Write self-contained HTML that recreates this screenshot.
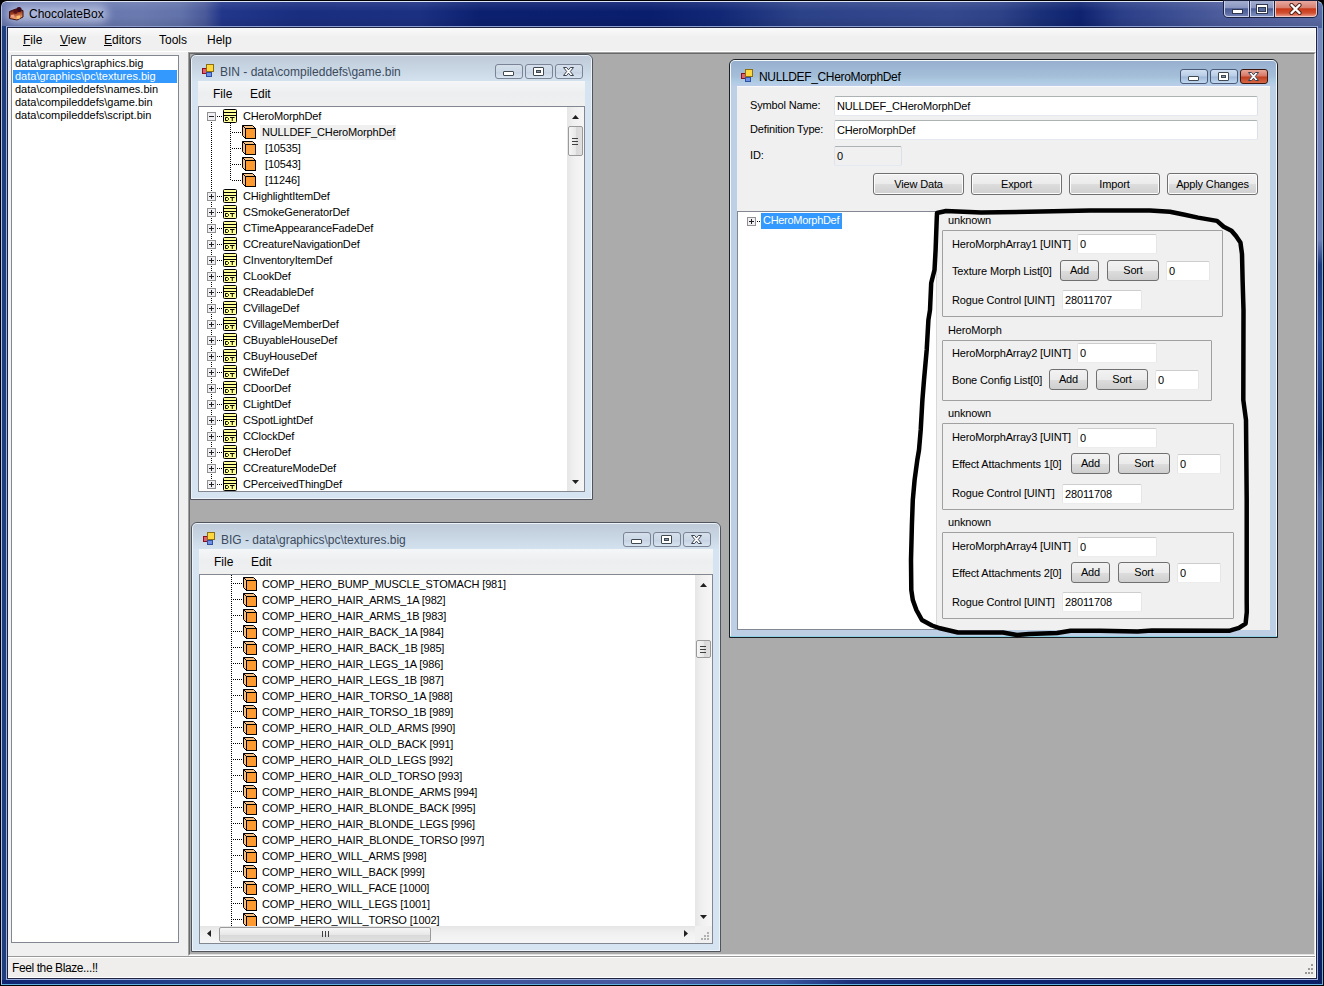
<!DOCTYPE html>
<html><head><meta charset="utf-8">
<style>
*{box-sizing:border-box;margin:0;padding:0}
html,body{width:1324px;height:986px;overflow:hidden;background:#000}
body{position:relative;font-family:"Liberation Sans",sans-serif;font-size:11px;color:#000}
.a{position:absolute}
.t{position:absolute;white-space:pre;line-height:13px}
</style></head><body>
<!-- main frame -->
<div class="a" style="left:0;top:0;width:1324px;height:986px;background:#000;border-radius:7px 7px 0 0"></div>
<div class="a" style="left:1px;top:1px;width:1322px;height:984px;background:linear-gradient(90deg,#1e3e7e,#1c3a7a 30%,#2a4284 60%,#4a5ea0);border-radius:6px 6px 0 0;border-left:1px solid #b0c0e8;border-top:1px solid #dde4f4;border-right:1px solid #6ab0e0;border-bottom:1px solid #60b0e0"></div>
<div class="a" style="left:1318px;top:28px;width:4px;height:956px;background:linear-gradient(#7888bc 0,#7080b8 212px,#1e3a80 237px,#3050a0 312px,#1a3478 412px,#5068a8 472px,#4a60a0 592px,#3a4c98 822px,#102a70 872px,#0a1e60 956px)"></div>
<div class="a" style="left:2px;top:980px;width:1316px;height:4px;background:linear-gradient(90deg,#0e2470 0,#1a3480 100px,#2c4a90 250px,#4a5aa0 660px,#3a58a0 780px,#1a2e78 850px,#0e2470 1000px,#0a1e68 1316px)"></div>
<!-- title bar gradient -->
<div class="a" style="left:2px;top:2px;width:1320px;height:24px;border-radius:5px 5px 0 0;background:linear-gradient(90deg,#6676ae 0,#6a7ab0 140px,#6272aa 178px,#4a5a9a 203px,#22368a 220px,#1a2e80 298px,#1c3082 418px,#0c2070 478px,#0a1e6e 648px,#122876 718px,#2c4288 798px,#34488e 948px,#2e4288 998px,#1a3078 1038px,#0e2270 1078px,#2a3e88 1118px,#4c5c9c 1218px,#5a6aa4 1320px)"></div>
<div class="a" style="left:2px;top:2px;width:1320px;height:24px;background:linear-gradient(#ffffff18,#ffffff00 40%,#00000000 60%,#00000018)"></div>
<div class="a" style="left:6px;top:26px;width:1312px;height:1px;background:#8d9fd0"></div>
<div class="a" style="left:6px;top:5px;width:102px;height:18px;border-radius:9px;background:rgba(225,232,250,.55);filter:blur(4px)"></div>
<!-- app icon -->
<svg class="a" style="left:8px;top:6px" width="16" height="16" viewBox="0 0 16 16">
<defs><linearGradient id="ib" x1="0" y1="0" x2="0.3" y2="1"><stop offset="0" stop-color="#4a1018"/><stop offset="0.45" stop-color="#9a3a20"/><stop offset="1" stop-color="#f8b070"/></linearGradient></defs>
<path d="M1.5 5.5 L8 3 L15 4.5 L15 11 L9 14 L1.5 12.5 Z" fill="url(#ib)" stroke="#3a1010" stroke-width="1"/>
<circle cx="11" cy="3.5" r="2.6" fill="#3a0c20"/><circle cx="7.5" cy="5.5" r="2.2" fill="#5a1418"/>
<path d="M3 9 L6 8.5 L7 12 L3 11.5Z" fill="#f0a088"/><path d="M8.5 10 L12 9.5 L12 12.5 L9 13Z" fill="#fcc070"/>
</svg>
<div class="t" style="left:29px;top:7px;font-size:12px;line-height:15px;color:#000">ChocolateBox</div>
<!-- caption buttons -->
<div class="a" style="left:1223px;top:0px;width:95px;height:18px;border-radius:0 0 5px 5px;background:#1a2240"></div>
<div class="a" style="left:1224px;top:1px;width:25px;height:16px;border-radius:0 0 0 4px;background:linear-gradient(#a4aed0,#8a96c0 45%,#4a5a94 52%,#5a6aa0 80%,#7080b4);border:1px solid #c8d0ec;border-top:none"></div>
<div class="a" style="left:1250px;top:1px;width:24px;height:16px;background:linear-gradient(#a4aed0,#8a96c0 45%,#4a5a94 52%,#6a7eb0 80%,#7a8cbc);border:1px solid #c8d0ec;border-top:none"></div>
<div class="a" style="left:1275px;top:1px;width:42px;height:16px;border-radius:0 0 4px 0;background:linear-gradient(#e8a8a0,#d88070 45%,#c83818 52%,#d05030 80%,#e89080 100%);border:1px solid #f0c8c0;border-top:none"></div>
<div class="a" style="left:1232px;top:9px;width:11px;height:5px;background:#fff;border:1px solid #303850"></div>
<div class="a" style="left:1256px;top:4px;width:12px;height:10px;border:1px solid #303850;background:#fff"></div>
<div class="a" style="left:1258px;top:7px;width:8px;height:5px;border:1px solid #303850;background:#5a6a9a"></div>
<svg class="a" style="left:1289px;top:3px" width="13" height="12" viewBox="0 0 13 12"><path d="M2.5 2 L10.5 10 M10.5 2 L2.5 10" stroke="#502018" stroke-width="4.2" stroke-linecap="round"/><path d="M2.5 2 L10.5 10 M10.5 2 L2.5 10" stroke="#fff" stroke-width="2.4" stroke-linecap="round"/></svg>

<!-- client area -->
<div class="a" style="left:6px;top:26px;width:1312px;height:954px;background:#1e2440;border:1px solid #a0b0e0;border-top-color:#8d9fd0"></div>
<div class="a" style="left:8px;top:28px;width:1308px;height:950px;background:#f0f0f0;border-right:1px solid #fff"></div>
<!-- menu bar -->
<div class="a" style="left:8px;top:28px;width:1307px;height:24px;background:linear-gradient(#fafafa,#f0f0f0 40%,#f0f0f0);border-bottom:1px solid #fff"></div>
<div class="t" style="left:23px;top:33px;font-size:12px;line-height:14px"><u>F</u>ile</div>
<div class="t" style="left:60px;top:33px;font-size:12px;line-height:14px"><u>V</u>iew</div>
<div class="t" style="left:104px;top:33px;font-size:12px;line-height:14px"><u>E</u>ditors</div>
<div class="t" style="left:159px;top:33px;font-size:12px;line-height:14px">Tools</div>
<div class="t" style="left:207px;top:33px;font-size:12px;line-height:14px">Help</div>

<!-- left listbox -->
<div class="a" style="left:11px;top:55px;width:168px;height:888px;background:#fff;border:1px solid #828790"></div>
<div class="a" style="left:13px;top:70px;width:164px;height:13px;background:#3399ff"></div>
<div class="t" style="left:15px;top:57px">data\graphics\graphics.big</div>
<div class="t" style="left:15px;top:70px;color:#fff">data\graphics\pc\textures.big</div>
<div class="t" style="left:15px;top:83px">data\compileddefs\names.bin</div>
<div class="t" style="left:15px;top:96px">data\compileddefs\game.bin</div>
<div class="t" style="left:15px;top:109px">data\compileddefs\script.bin</div>

<!-- MDI client -->
<div class="a" style="left:188px;top:52px;width:1128px;height:904px;background:#ababab;border:1px solid;border-color:#a0a0a0 #fff #fff #a0a0a0"></div>
<div class="a" style="left:189px;top:53px;width:1126px;height:902px;border:1px solid;border-color:#696969 #e3e3e3 #e3e3e3 #696969"></div>

<!-- status bar -->
<div class="a" style="left:8px;top:956px;width:1307px;height:1px;background:#999"></div>
<div class="a" style="left:8px;top:957px;width:1307px;height:21px;background:#f0eeec;border-top:1px solid #fff;border-bottom:1px solid #fff"></div>
<div class="t" style="left:12px;top:962px;font-size:12px;letter-spacing:-0.4px">Feel the Blaze...!!</div>
<!-- grip -->
<svg class="a" style="left:1302px;top:963px" width="12" height="12" viewBox="0 0 12 12" fill="#9a9a9a">
<rect x="9" y="1" width="2" height="2"/><rect x="6" y="5" width="2" height="2"/><rect x="9" y="5" width="2" height="2"/>
<rect x="3" y="9" width="2" height="2"/><rect x="6" y="9" width="2" height="2"/><rect x="9" y="9" width="2" height="2"/></svg>


<div class="a" style="left:190px;top:54px;width:403px;height:446px;background:#d6e4f2;border:1px solid #50545c;border-radius:6px 6px 0 0;overflow:hidden">
<div class="a" style="left:0px;top:0px;width:401px;height:444px;border:1px solid rgba(255,255,255,0.55);border-radius:5px 5px 0 0;border-bottom-color:rgba(255,255,255,.6)"></div>
<div class="a" style="left:1px;top:1px;width:399px;height:25px;background:linear-gradient(#c0cad8,#c8d6e4 50%,#d4e2f0);border-radius:4px 4px 0 0"></div>
<svg class="a" style="left:10px;top:9px" width="14" height="14" viewBox="0 0 14 14"><rect x="1.5" y="4.5" width="4" height="5" fill="#e06070" stroke="#8a1020"/><rect x="5.5" y="0.5" width="7" height="7" fill="#ffd840" stroke="#8a7010"/><rect x="5.5" y="8.5" width="5" height="4" fill="#7090e8" stroke="#3050a0"/></svg>
<div class="t" style="left:29px;top:9px;font-size:12px;color:#3c4a5c;letter-spacing:0px;line-height:16px">BIN - data\compileddefs\game.bin</div>
<div class="a" style="left:304px;top:9px;width:28px;height:15px;background:linear-gradient(#d6e0ec,#ccd8e6 50%,#c6d2e2 55%,#d8e4f0);border:1px solid #7a8494;border-radius:3px"></div>
<div class="a" style="left:312px;top:16px;width:11px;height:5px;background:#fff;border:1px solid #404850;border-radius:1px"></div>
<div class="a" style="left:334px;top:9px;width:28px;height:15px;background:linear-gradient(#d6e0ec,#ccd8e6 50%,#c6d2e2 55%,#d8e4f0);border:1px solid #7a8494;border-radius:3px"></div>
<div class="a" style="left:342px;top:12px;width:11px;height:9px;background:#fff;border:1px solid #404850;border-radius:1px"></div>
<div class="a" style="left:345px;top:15px;width:5px;height:3px;background:#8a94a4;border:1px solid #404850"></div>
<div class="a" style="left:364px;top:9px;width:28px;height:15px;background:linear-gradient(#d6e0ec,#ccd8e6 50%,#c6d2e2 55%,#d8e4f0);border:1px solid #7a8494;border-radius:3px"></div>
<svg class="a" style="left:372px;top:12px" width="11" height="9" viewBox="0 0 11 9"><path d="M0.5 0.5H3.6L5.5 2.8L7.4 0.5H10.5L7.3 4.5L10.5 8.5H7.4L5.5 6.2L3.6 8.5H0.5L3.7 4.5Z" fill="#fff" stroke="#3a4250" stroke-width="1" stroke-linejoin="round"/></svg>
<div class="a" style="left:7px;top:26px;width:387px;height:411px;background:#f0f0f0;border-top:1px solid #f8fafc"></div>
<div class="a" style="left:7px;top:26px;width:387px;height:25px;background:linear-gradient(#f4f6f8,#eceef0 50%,#f0f0f0)"></div>
<div class="t" style="left:22px;top:32px;font-size:12px;color:#000;letter-spacing:0px;line-height:15px">File</div>
<div class="t" style="left:59px;top:32px;font-size:12px;color:#000;letter-spacing:0px;line-height:15px">Edit</div>
<div class="a" style="left:7px;top:51px;width:387px;height:386px;background:#fff;border:1px solid #828790"></div>
<div class="a" style="left:8px;top:52px;width:368px;height:384px;overflow:hidden">
<svg class="a" style="left:8px;top:5px" width="9" height="9" viewBox="0 0 9 9"><rect x="0.5" y="0.5" width="8" height="8" fill="#f0f0f4" stroke="#919191"/><path d="M2 4.5H7" stroke="#202020"/></svg>
<div class="a" style="left:18px;top:9px;width:6px;height:1px;background:repeating-linear-gradient(90deg,#000 0 1px,transparent 1px 2px)"></div>
<svg class="a" style="left:24px;top:2px" width="14" height="14" viewBox="0 0 14 14"><rect x="0.5" y="0.5" width="13" height="13" rx="1" fill="#ffff99" stroke="#000"/><path d="M1 3.5H13M1 6.5H13" stroke="#000"/><path d="M2.5 8.5h2l1 1v1l-1 1h-2z" fill="none" stroke="#000"/><path d="M7 8.5h4.5M9.25 8.5v3.5" stroke="#000"/></svg>
<div class="t" style="left:44px;top:3px;font-size:11px;color:#000;letter-spacing:-0.15px;">CHeroMorphDef</div>
<div class="a" style="left:31px;top:16px;width:1px;height:10px;background:repeating-linear-gradient(#000 0 1px,transparent 1px 2px)"></div>
<div class="a" style="left:33px;top:25px;width:9px;height:1px;background:repeating-linear-gradient(90deg,#000 0 1px,transparent 1px 2px)"></div>
<svg class="a" style="left:43px;top:18px" width="14" height="14" viewBox="0 0 14 14"><path d="M0.5 0.5H10.5L13.5 3.5V13.5H3.5L0.5 10.5Z" fill="#f8c080" stroke="#000"/><rect x="3.5" y="3.5" width="10" height="10" fill="#ff9a30" stroke="#000"/><path d="M0.5 0.5L3.5 3.5" stroke="#000"/></svg>
<div class="a" style="left:61px;top:18px;width:136px;height:15px;background:#f0f0f0"></div>
<div class="t" style="left:63px;top:19px;font-size:11px;color:#000;letter-spacing:-0.15px;">NULLDEF_CHeroMorphDef</div>
<div class="a" style="left:33px;top:41px;width:9px;height:1px;background:repeating-linear-gradient(90deg,#000 0 1px,transparent 1px 2px)"></div>
<svg class="a" style="left:43px;top:34px" width="14" height="14" viewBox="0 0 14 14"><path d="M0.5 0.5H10.5L13.5 3.5V13.5H3.5L0.5 10.5Z" fill="#f8c080" stroke="#000"/><rect x="3.5" y="3.5" width="10" height="10" fill="#ff9a30" stroke="#000"/><path d="M0.5 0.5L3.5 3.5" stroke="#000"/></svg>
<div class="t" style="left:66px;top:35px;font-size:11px;color:#000;letter-spacing:-0.15px;">[10535]</div>
<div class="a" style="left:33px;top:57px;width:9px;height:1px;background:repeating-linear-gradient(90deg,#000 0 1px,transparent 1px 2px)"></div>
<svg class="a" style="left:43px;top:50px" width="14" height="14" viewBox="0 0 14 14"><path d="M0.5 0.5H10.5L13.5 3.5V13.5H3.5L0.5 10.5Z" fill="#f8c080" stroke="#000"/><rect x="3.5" y="3.5" width="10" height="10" fill="#ff9a30" stroke="#000"/><path d="M0.5 0.5L3.5 3.5" stroke="#000"/></svg>
<div class="t" style="left:66px;top:51px;font-size:11px;color:#000;letter-spacing:-0.15px;">[10543]</div>
<div class="a" style="left:33px;top:73px;width:9px;height:1px;background:repeating-linear-gradient(90deg,#000 0 1px,transparent 1px 2px)"></div>
<svg class="a" style="left:43px;top:66px" width="14" height="14" viewBox="0 0 14 14"><path d="M0.5 0.5H10.5L13.5 3.5V13.5H3.5L0.5 10.5Z" fill="#f8c080" stroke="#000"/><rect x="3.5" y="3.5" width="10" height="10" fill="#ff9a30" stroke="#000"/><path d="M0.5 0.5L3.5 3.5" stroke="#000"/></svg>
<div class="t" style="left:66px;top:67px;font-size:11px;color:#000;letter-spacing:-0.15px;">[11246]</div>
<div class="a" style="left:31px;top:16px;width:1px;height:57px;background:repeating-linear-gradient(#000 0 1px,transparent 1px 2px)"></div>
<div class="a" style="left:12px;top:15px;width:1px;height:358px;background:repeating-linear-gradient(#000 0 1px,transparent 1px 2px)"></div>
<svg class="a" style="left:8px;top:85px" width="9" height="9" viewBox="0 0 9 9"><rect x="0.5" y="0.5" width="8" height="8" fill="#f0f0f4" stroke="#919191"/><path d="M2 4.5H7" stroke="#202020"/><path d="M4.5 2V7" stroke="#202020"/></svg>
<div class="a" style="left:18px;top:89px;width:6px;height:1px;background:repeating-linear-gradient(90deg,#000 0 1px,transparent 1px 2px)"></div>
<svg class="a" style="left:24px;top:82px" width="14" height="14" viewBox="0 0 14 14"><rect x="0.5" y="0.5" width="13" height="13" rx="1" fill="#ffff99" stroke="#000"/><path d="M1 3.5H13M1 6.5H13" stroke="#000"/><path d="M2.5 8.5h2l1 1v1l-1 1h-2z" fill="none" stroke="#000"/><path d="M7 8.5h4.5M9.25 8.5v3.5" stroke="#000"/></svg>
<div class="t" style="left:44px;top:83px;font-size:11px;color:#000;letter-spacing:-0.15px;">CHighlightItemDef</div>
<svg class="a" style="left:8px;top:101px" width="9" height="9" viewBox="0 0 9 9"><rect x="0.5" y="0.5" width="8" height="8" fill="#f0f0f4" stroke="#919191"/><path d="M2 4.5H7" stroke="#202020"/><path d="M4.5 2V7" stroke="#202020"/></svg>
<div class="a" style="left:18px;top:105px;width:6px;height:1px;background:repeating-linear-gradient(90deg,#000 0 1px,transparent 1px 2px)"></div>
<svg class="a" style="left:24px;top:98px" width="14" height="14" viewBox="0 0 14 14"><rect x="0.5" y="0.5" width="13" height="13" rx="1" fill="#ffff99" stroke="#000"/><path d="M1 3.5H13M1 6.5H13" stroke="#000"/><path d="M2.5 8.5h2l1 1v1l-1 1h-2z" fill="none" stroke="#000"/><path d="M7 8.5h4.5M9.25 8.5v3.5" stroke="#000"/></svg>
<div class="t" style="left:44px;top:99px;font-size:11px;color:#000;letter-spacing:-0.15px;">CSmokeGeneratorDef</div>
<svg class="a" style="left:8px;top:117px" width="9" height="9" viewBox="0 0 9 9"><rect x="0.5" y="0.5" width="8" height="8" fill="#f0f0f4" stroke="#919191"/><path d="M2 4.5H7" stroke="#202020"/><path d="M4.5 2V7" stroke="#202020"/></svg>
<div class="a" style="left:18px;top:121px;width:6px;height:1px;background:repeating-linear-gradient(90deg,#000 0 1px,transparent 1px 2px)"></div>
<svg class="a" style="left:24px;top:114px" width="14" height="14" viewBox="0 0 14 14"><rect x="0.5" y="0.5" width="13" height="13" rx="1" fill="#ffff99" stroke="#000"/><path d="M1 3.5H13M1 6.5H13" stroke="#000"/><path d="M2.5 8.5h2l1 1v1l-1 1h-2z" fill="none" stroke="#000"/><path d="M7 8.5h4.5M9.25 8.5v3.5" stroke="#000"/></svg>
<div class="t" style="left:44px;top:115px;font-size:11px;color:#000;letter-spacing:-0.15px;">CTimeAppearanceFadeDef</div>
<svg class="a" style="left:8px;top:133px" width="9" height="9" viewBox="0 0 9 9"><rect x="0.5" y="0.5" width="8" height="8" fill="#f0f0f4" stroke="#919191"/><path d="M2 4.5H7" stroke="#202020"/><path d="M4.5 2V7" stroke="#202020"/></svg>
<div class="a" style="left:18px;top:137px;width:6px;height:1px;background:repeating-linear-gradient(90deg,#000 0 1px,transparent 1px 2px)"></div>
<svg class="a" style="left:24px;top:130px" width="14" height="14" viewBox="0 0 14 14"><rect x="0.5" y="0.5" width="13" height="13" rx="1" fill="#ffff99" stroke="#000"/><path d="M1 3.5H13M1 6.5H13" stroke="#000"/><path d="M2.5 8.5h2l1 1v1l-1 1h-2z" fill="none" stroke="#000"/><path d="M7 8.5h4.5M9.25 8.5v3.5" stroke="#000"/></svg>
<div class="t" style="left:44px;top:131px;font-size:11px;color:#000;letter-spacing:-0.15px;">CCreatureNavigationDef</div>
<svg class="a" style="left:8px;top:149px" width="9" height="9" viewBox="0 0 9 9"><rect x="0.5" y="0.5" width="8" height="8" fill="#f0f0f4" stroke="#919191"/><path d="M2 4.5H7" stroke="#202020"/><path d="M4.5 2V7" stroke="#202020"/></svg>
<div class="a" style="left:18px;top:153px;width:6px;height:1px;background:repeating-linear-gradient(90deg,#000 0 1px,transparent 1px 2px)"></div>
<svg class="a" style="left:24px;top:146px" width="14" height="14" viewBox="0 0 14 14"><rect x="0.5" y="0.5" width="13" height="13" rx="1" fill="#ffff99" stroke="#000"/><path d="M1 3.5H13M1 6.5H13" stroke="#000"/><path d="M2.5 8.5h2l1 1v1l-1 1h-2z" fill="none" stroke="#000"/><path d="M7 8.5h4.5M9.25 8.5v3.5" stroke="#000"/></svg>
<div class="t" style="left:44px;top:147px;font-size:11px;color:#000;letter-spacing:-0.15px;">CInventoryItemDef</div>
<svg class="a" style="left:8px;top:165px" width="9" height="9" viewBox="0 0 9 9"><rect x="0.5" y="0.5" width="8" height="8" fill="#f0f0f4" stroke="#919191"/><path d="M2 4.5H7" stroke="#202020"/><path d="M4.5 2V7" stroke="#202020"/></svg>
<div class="a" style="left:18px;top:169px;width:6px;height:1px;background:repeating-linear-gradient(90deg,#000 0 1px,transparent 1px 2px)"></div>
<svg class="a" style="left:24px;top:162px" width="14" height="14" viewBox="0 0 14 14"><rect x="0.5" y="0.5" width="13" height="13" rx="1" fill="#ffff99" stroke="#000"/><path d="M1 3.5H13M1 6.5H13" stroke="#000"/><path d="M2.5 8.5h2l1 1v1l-1 1h-2z" fill="none" stroke="#000"/><path d="M7 8.5h4.5M9.25 8.5v3.5" stroke="#000"/></svg>
<div class="t" style="left:44px;top:163px;font-size:11px;color:#000;letter-spacing:-0.15px;">CLookDef</div>
<svg class="a" style="left:8px;top:181px" width="9" height="9" viewBox="0 0 9 9"><rect x="0.5" y="0.5" width="8" height="8" fill="#f0f0f4" stroke="#919191"/><path d="M2 4.5H7" stroke="#202020"/><path d="M4.5 2V7" stroke="#202020"/></svg>
<div class="a" style="left:18px;top:185px;width:6px;height:1px;background:repeating-linear-gradient(90deg,#000 0 1px,transparent 1px 2px)"></div>
<svg class="a" style="left:24px;top:178px" width="14" height="14" viewBox="0 0 14 14"><rect x="0.5" y="0.5" width="13" height="13" rx="1" fill="#ffff99" stroke="#000"/><path d="M1 3.5H13M1 6.5H13" stroke="#000"/><path d="M2.5 8.5h2l1 1v1l-1 1h-2z" fill="none" stroke="#000"/><path d="M7 8.5h4.5M9.25 8.5v3.5" stroke="#000"/></svg>
<div class="t" style="left:44px;top:179px;font-size:11px;color:#000;letter-spacing:-0.15px;">CReadableDef</div>
<svg class="a" style="left:8px;top:197px" width="9" height="9" viewBox="0 0 9 9"><rect x="0.5" y="0.5" width="8" height="8" fill="#f0f0f4" stroke="#919191"/><path d="M2 4.5H7" stroke="#202020"/><path d="M4.5 2V7" stroke="#202020"/></svg>
<div class="a" style="left:18px;top:201px;width:6px;height:1px;background:repeating-linear-gradient(90deg,#000 0 1px,transparent 1px 2px)"></div>
<svg class="a" style="left:24px;top:194px" width="14" height="14" viewBox="0 0 14 14"><rect x="0.5" y="0.5" width="13" height="13" rx="1" fill="#ffff99" stroke="#000"/><path d="M1 3.5H13M1 6.5H13" stroke="#000"/><path d="M2.5 8.5h2l1 1v1l-1 1h-2z" fill="none" stroke="#000"/><path d="M7 8.5h4.5M9.25 8.5v3.5" stroke="#000"/></svg>
<div class="t" style="left:44px;top:195px;font-size:11px;color:#000;letter-spacing:-0.15px;">CVillageDef</div>
<svg class="a" style="left:8px;top:213px" width="9" height="9" viewBox="0 0 9 9"><rect x="0.5" y="0.5" width="8" height="8" fill="#f0f0f4" stroke="#919191"/><path d="M2 4.5H7" stroke="#202020"/><path d="M4.5 2V7" stroke="#202020"/></svg>
<div class="a" style="left:18px;top:217px;width:6px;height:1px;background:repeating-linear-gradient(90deg,#000 0 1px,transparent 1px 2px)"></div>
<svg class="a" style="left:24px;top:210px" width="14" height="14" viewBox="0 0 14 14"><rect x="0.5" y="0.5" width="13" height="13" rx="1" fill="#ffff99" stroke="#000"/><path d="M1 3.5H13M1 6.5H13" stroke="#000"/><path d="M2.5 8.5h2l1 1v1l-1 1h-2z" fill="none" stroke="#000"/><path d="M7 8.5h4.5M9.25 8.5v3.5" stroke="#000"/></svg>
<div class="t" style="left:44px;top:211px;font-size:11px;color:#000;letter-spacing:-0.15px;">CVillageMemberDef</div>
<svg class="a" style="left:8px;top:229px" width="9" height="9" viewBox="0 0 9 9"><rect x="0.5" y="0.5" width="8" height="8" fill="#f0f0f4" stroke="#919191"/><path d="M2 4.5H7" stroke="#202020"/><path d="M4.5 2V7" stroke="#202020"/></svg>
<div class="a" style="left:18px;top:233px;width:6px;height:1px;background:repeating-linear-gradient(90deg,#000 0 1px,transparent 1px 2px)"></div>
<svg class="a" style="left:24px;top:226px" width="14" height="14" viewBox="0 0 14 14"><rect x="0.5" y="0.5" width="13" height="13" rx="1" fill="#ffff99" stroke="#000"/><path d="M1 3.5H13M1 6.5H13" stroke="#000"/><path d="M2.5 8.5h2l1 1v1l-1 1h-2z" fill="none" stroke="#000"/><path d="M7 8.5h4.5M9.25 8.5v3.5" stroke="#000"/></svg>
<div class="t" style="left:44px;top:227px;font-size:11px;color:#000;letter-spacing:-0.15px;">CBuyableHouseDef</div>
<svg class="a" style="left:8px;top:245px" width="9" height="9" viewBox="0 0 9 9"><rect x="0.5" y="0.5" width="8" height="8" fill="#f0f0f4" stroke="#919191"/><path d="M2 4.5H7" stroke="#202020"/><path d="M4.5 2V7" stroke="#202020"/></svg>
<div class="a" style="left:18px;top:249px;width:6px;height:1px;background:repeating-linear-gradient(90deg,#000 0 1px,transparent 1px 2px)"></div>
<svg class="a" style="left:24px;top:242px" width="14" height="14" viewBox="0 0 14 14"><rect x="0.5" y="0.5" width="13" height="13" rx="1" fill="#ffff99" stroke="#000"/><path d="M1 3.5H13M1 6.5H13" stroke="#000"/><path d="M2.5 8.5h2l1 1v1l-1 1h-2z" fill="none" stroke="#000"/><path d="M7 8.5h4.5M9.25 8.5v3.5" stroke="#000"/></svg>
<div class="t" style="left:44px;top:243px;font-size:11px;color:#000;letter-spacing:-0.15px;">CBuyHouseDef</div>
<svg class="a" style="left:8px;top:261px" width="9" height="9" viewBox="0 0 9 9"><rect x="0.5" y="0.5" width="8" height="8" fill="#f0f0f4" stroke="#919191"/><path d="M2 4.5H7" stroke="#202020"/><path d="M4.5 2V7" stroke="#202020"/></svg>
<div class="a" style="left:18px;top:265px;width:6px;height:1px;background:repeating-linear-gradient(90deg,#000 0 1px,transparent 1px 2px)"></div>
<svg class="a" style="left:24px;top:258px" width="14" height="14" viewBox="0 0 14 14"><rect x="0.5" y="0.5" width="13" height="13" rx="1" fill="#ffff99" stroke="#000"/><path d="M1 3.5H13M1 6.5H13" stroke="#000"/><path d="M2.5 8.5h2l1 1v1l-1 1h-2z" fill="none" stroke="#000"/><path d="M7 8.5h4.5M9.25 8.5v3.5" stroke="#000"/></svg>
<div class="t" style="left:44px;top:259px;font-size:11px;color:#000;letter-spacing:-0.15px;">CWifeDef</div>
<svg class="a" style="left:8px;top:277px" width="9" height="9" viewBox="0 0 9 9"><rect x="0.5" y="0.5" width="8" height="8" fill="#f0f0f4" stroke="#919191"/><path d="M2 4.5H7" stroke="#202020"/><path d="M4.5 2V7" stroke="#202020"/></svg>
<div class="a" style="left:18px;top:281px;width:6px;height:1px;background:repeating-linear-gradient(90deg,#000 0 1px,transparent 1px 2px)"></div>
<svg class="a" style="left:24px;top:274px" width="14" height="14" viewBox="0 0 14 14"><rect x="0.5" y="0.5" width="13" height="13" rx="1" fill="#ffff99" stroke="#000"/><path d="M1 3.5H13M1 6.5H13" stroke="#000"/><path d="M2.5 8.5h2l1 1v1l-1 1h-2z" fill="none" stroke="#000"/><path d="M7 8.5h4.5M9.25 8.5v3.5" stroke="#000"/></svg>
<div class="t" style="left:44px;top:275px;font-size:11px;color:#000;letter-spacing:-0.15px;">CDoorDef</div>
<svg class="a" style="left:8px;top:293px" width="9" height="9" viewBox="0 0 9 9"><rect x="0.5" y="0.5" width="8" height="8" fill="#f0f0f4" stroke="#919191"/><path d="M2 4.5H7" stroke="#202020"/><path d="M4.5 2V7" stroke="#202020"/></svg>
<div class="a" style="left:18px;top:297px;width:6px;height:1px;background:repeating-linear-gradient(90deg,#000 0 1px,transparent 1px 2px)"></div>
<svg class="a" style="left:24px;top:290px" width="14" height="14" viewBox="0 0 14 14"><rect x="0.5" y="0.5" width="13" height="13" rx="1" fill="#ffff99" stroke="#000"/><path d="M1 3.5H13M1 6.5H13" stroke="#000"/><path d="M2.5 8.5h2l1 1v1l-1 1h-2z" fill="none" stroke="#000"/><path d="M7 8.5h4.5M9.25 8.5v3.5" stroke="#000"/></svg>
<div class="t" style="left:44px;top:291px;font-size:11px;color:#000;letter-spacing:-0.15px;">CLightDef</div>
<svg class="a" style="left:8px;top:309px" width="9" height="9" viewBox="0 0 9 9"><rect x="0.5" y="0.5" width="8" height="8" fill="#f0f0f4" stroke="#919191"/><path d="M2 4.5H7" stroke="#202020"/><path d="M4.5 2V7" stroke="#202020"/></svg>
<div class="a" style="left:18px;top:313px;width:6px;height:1px;background:repeating-linear-gradient(90deg,#000 0 1px,transparent 1px 2px)"></div>
<svg class="a" style="left:24px;top:306px" width="14" height="14" viewBox="0 0 14 14"><rect x="0.5" y="0.5" width="13" height="13" rx="1" fill="#ffff99" stroke="#000"/><path d="M1 3.5H13M1 6.5H13" stroke="#000"/><path d="M2.5 8.5h2l1 1v1l-1 1h-2z" fill="none" stroke="#000"/><path d="M7 8.5h4.5M9.25 8.5v3.5" stroke="#000"/></svg>
<div class="t" style="left:44px;top:307px;font-size:11px;color:#000;letter-spacing:-0.15px;">CSpotLightDef</div>
<svg class="a" style="left:8px;top:325px" width="9" height="9" viewBox="0 0 9 9"><rect x="0.5" y="0.5" width="8" height="8" fill="#f0f0f4" stroke="#919191"/><path d="M2 4.5H7" stroke="#202020"/><path d="M4.5 2V7" stroke="#202020"/></svg>
<div class="a" style="left:18px;top:329px;width:6px;height:1px;background:repeating-linear-gradient(90deg,#000 0 1px,transparent 1px 2px)"></div>
<svg class="a" style="left:24px;top:322px" width="14" height="14" viewBox="0 0 14 14"><rect x="0.5" y="0.5" width="13" height="13" rx="1" fill="#ffff99" stroke="#000"/><path d="M1 3.5H13M1 6.5H13" stroke="#000"/><path d="M2.5 8.5h2l1 1v1l-1 1h-2z" fill="none" stroke="#000"/><path d="M7 8.5h4.5M9.25 8.5v3.5" stroke="#000"/></svg>
<div class="t" style="left:44px;top:323px;font-size:11px;color:#000;letter-spacing:-0.15px;">CClockDef</div>
<svg class="a" style="left:8px;top:341px" width="9" height="9" viewBox="0 0 9 9"><rect x="0.5" y="0.5" width="8" height="8" fill="#f0f0f4" stroke="#919191"/><path d="M2 4.5H7" stroke="#202020"/><path d="M4.5 2V7" stroke="#202020"/></svg>
<div class="a" style="left:18px;top:345px;width:6px;height:1px;background:repeating-linear-gradient(90deg,#000 0 1px,transparent 1px 2px)"></div>
<svg class="a" style="left:24px;top:338px" width="14" height="14" viewBox="0 0 14 14"><rect x="0.5" y="0.5" width="13" height="13" rx="1" fill="#ffff99" stroke="#000"/><path d="M1 3.5H13M1 6.5H13" stroke="#000"/><path d="M2.5 8.5h2l1 1v1l-1 1h-2z" fill="none" stroke="#000"/><path d="M7 8.5h4.5M9.25 8.5v3.5" stroke="#000"/></svg>
<div class="t" style="left:44px;top:339px;font-size:11px;color:#000;letter-spacing:-0.15px;">CHeroDef</div>
<svg class="a" style="left:8px;top:357px" width="9" height="9" viewBox="0 0 9 9"><rect x="0.5" y="0.5" width="8" height="8" fill="#f0f0f4" stroke="#919191"/><path d="M2 4.5H7" stroke="#202020"/><path d="M4.5 2V7" stroke="#202020"/></svg>
<div class="a" style="left:18px;top:361px;width:6px;height:1px;background:repeating-linear-gradient(90deg,#000 0 1px,transparent 1px 2px)"></div>
<svg class="a" style="left:24px;top:354px" width="14" height="14" viewBox="0 0 14 14"><rect x="0.5" y="0.5" width="13" height="13" rx="1" fill="#ffff99" stroke="#000"/><path d="M1 3.5H13M1 6.5H13" stroke="#000"/><path d="M2.5 8.5h2l1 1v1l-1 1h-2z" fill="none" stroke="#000"/><path d="M7 8.5h4.5M9.25 8.5v3.5" stroke="#000"/></svg>
<div class="t" style="left:44px;top:355px;font-size:11px;color:#000;letter-spacing:-0.15px;">CCreatureModeDef</div>
<svg class="a" style="left:8px;top:373px" width="9" height="9" viewBox="0 0 9 9"><rect x="0.5" y="0.5" width="8" height="8" fill="#f0f0f4" stroke="#919191"/><path d="M2 4.5H7" stroke="#202020"/><path d="M4.5 2V7" stroke="#202020"/></svg>
<div class="a" style="left:18px;top:377px;width:6px;height:1px;background:repeating-linear-gradient(90deg,#000 0 1px,transparent 1px 2px)"></div>
<svg class="a" style="left:24px;top:370px" width="14" height="14" viewBox="0 0 14 14"><rect x="0.5" y="0.5" width="13" height="13" rx="1" fill="#ffff99" stroke="#000"/><path d="M1 3.5H13M1 6.5H13" stroke="#000"/><path d="M2.5 8.5h2l1 1v1l-1 1h-2z" fill="none" stroke="#000"/><path d="M7 8.5h4.5M9.25 8.5v3.5" stroke="#000"/></svg>
<div class="t" style="left:44px;top:371px;font-size:11px;color:#000;letter-spacing:-0.15px;">CPerceivedThingDef</div>
</div>
<div class="a" style="left:376px;top:52px;width:17px;height:384px;background:linear-gradient(90deg,#e6e6e6,#f0f0f0 40%,#f6f6f6)"></div>
<svg class="a" style="left:381px;top:60px" width="7" height="4" viewBox="0 0 7 4"><path d="M0 4L3.5 0L7 4Z" fill="#202020"/></svg>
<svg class="a" style="left:381px;top:425px" width="7" height="4" viewBox="0 0 7 4"><path d="M0 0L3.5 4L7 0Z" fill="#202020"/></svg>
<div class="a" style="left:377px;top:71px;width:15px;height:30px;border:1px solid #9a9a9a;border-radius:2px;background:linear-gradient(90deg,#f6f6f6,#e8e8e8 50%,#d8d8d8 51%,#e0e0e0)"></div>
<div class="a" style="left:381px;top:83px;width:6px;height:1px;background:#404040"></div>
<div class="a" style="left:381px;top:86px;width:6px;height:1px;background:#404040"></div>
<div class="a" style="left:381px;top:89px;width:6px;height:1px;background:#404040"></div>
</div>
<div class="a" style="left:191px;top:522px;width:530px;height:430px;background:#d6e4f2;border:1px solid #50545c;border-radius:6px 6px 0 0;overflow:hidden">
<div class="a" style="left:0px;top:0px;width:528px;height:428px;border:1px solid rgba(255,255,255,0.55);border-radius:5px 5px 0 0;border-bottom-color:rgba(255,255,255,.6)"></div>
<div class="a" style="left:1px;top:1px;width:526px;height:25px;background:linear-gradient(#c0cad8,#c8d6e4 50%,#d4e2f0);border-radius:4px 4px 0 0"></div>
<svg class="a" style="left:10px;top:9px" width="14" height="14" viewBox="0 0 14 14"><rect x="1.5" y="4.5" width="4" height="5" fill="#e06070" stroke="#8a1020"/><rect x="5.5" y="0.5" width="7" height="7" fill="#ffd840" stroke="#8a7010"/><rect x="5.5" y="8.5" width="5" height="4" fill="#7090e8" stroke="#3050a0"/></svg>
<div class="t" style="left:29px;top:9px;font-size:12px;color:#3c4a5c;letter-spacing:0px;line-height:16px">BIG - data\graphics\pc\textures.big</div>
<div class="a" style="left:431px;top:9px;width:28px;height:15px;background:linear-gradient(#d6e0ec,#ccd8e6 50%,#c6d2e2 55%,#d8e4f0);border:1px solid #7a8494;border-radius:3px"></div>
<div class="a" style="left:439px;top:16px;width:11px;height:5px;background:#fff;border:1px solid #404850;border-radius:1px"></div>
<div class="a" style="left:461px;top:9px;width:28px;height:15px;background:linear-gradient(#d6e0ec,#ccd8e6 50%,#c6d2e2 55%,#d8e4f0);border:1px solid #7a8494;border-radius:3px"></div>
<div class="a" style="left:469px;top:12px;width:11px;height:9px;background:#fff;border:1px solid #404850;border-radius:1px"></div>
<div class="a" style="left:472px;top:15px;width:5px;height:3px;background:#8a94a4;border:1px solid #404850"></div>
<div class="a" style="left:491px;top:9px;width:28px;height:15px;background:linear-gradient(#d6e0ec,#ccd8e6 50%,#c6d2e2 55%,#d8e4f0);border:1px solid #7a8494;border-radius:3px"></div>
<svg class="a" style="left:499px;top:12px" width="11" height="9" viewBox="0 0 11 9"><path d="M0.5 0.5H3.6L5.5 2.8L7.4 0.5H10.5L7.3 4.5L10.5 8.5H7.4L5.5 6.2L3.6 8.5H0.5L3.7 4.5Z" fill="#fff" stroke="#3a4250" stroke-width="1" stroke-linejoin="round"/></svg>
<div class="a" style="left:7px;top:26px;width:514px;height:395px;background:#f0f0f0;border-top:1px solid #f8fafc"></div>
<div class="a" style="left:7px;top:26px;width:514px;height:25px;background:linear-gradient(#f4f6f8,#eceef0 50%,#f0f0f0)"></div>
<div class="t" style="left:22px;top:32px;font-size:12px;color:#000;letter-spacing:0px;line-height:15px">File</div>
<div class="t" style="left:59px;top:32px;font-size:12px;color:#000;letter-spacing:0px;line-height:15px">Edit</div>
<div class="a" style="left:7px;top:51px;width:514px;height:370px;background:#fff;border:1px solid #828790"></div>
<div class="a" style="left:8px;top:52px;width:495px;height:351px;overflow:hidden">
<div class="a" style="left:31px;top:0px;width:1px;height:351px;background:repeating-linear-gradient(#000 0 1px,transparent 1px 2px)"></div>
<div class="a" style="left:33px;top:8px;width:9px;height:1px;background:repeating-linear-gradient(90deg,#000 0 1px,transparent 1px 2px)"></div>
<svg class="a" style="left:43px;top:2px" width="14" height="14" viewBox="0 0 14 14"><path d="M0.5 0.5H10.5L13.5 3.5V13.5H3.5L0.5 10.5Z" fill="#f8c080" stroke="#000"/><rect x="3.5" y="3.5" width="10" height="10" fill="#ff9a30" stroke="#000"/><path d="M0.5 0.5L3.5 3.5" stroke="#000"/></svg>
<div class="t" style="left:62px;top:3px;font-size:11px;color:#000;letter-spacing:-0.15px;">COMP_HERO_BUMP_MUSCLE_STOMACH [981]</div>
<div class="a" style="left:33px;top:24px;width:9px;height:1px;background:repeating-linear-gradient(90deg,#000 0 1px,transparent 1px 2px)"></div>
<svg class="a" style="left:43px;top:18px" width="14" height="14" viewBox="0 0 14 14"><path d="M0.5 0.5H10.5L13.5 3.5V13.5H3.5L0.5 10.5Z" fill="#f8c080" stroke="#000"/><rect x="3.5" y="3.5" width="10" height="10" fill="#ff9a30" stroke="#000"/><path d="M0.5 0.5L3.5 3.5" stroke="#000"/></svg>
<div class="t" style="left:62px;top:19px;font-size:11px;color:#000;letter-spacing:-0.15px;">COMP_HERO_HAIR_ARMS_1A [982]</div>
<div class="a" style="left:33px;top:40px;width:9px;height:1px;background:repeating-linear-gradient(90deg,#000 0 1px,transparent 1px 2px)"></div>
<svg class="a" style="left:43px;top:34px" width="14" height="14" viewBox="0 0 14 14"><path d="M0.5 0.5H10.5L13.5 3.5V13.5H3.5L0.5 10.5Z" fill="#f8c080" stroke="#000"/><rect x="3.5" y="3.5" width="10" height="10" fill="#ff9a30" stroke="#000"/><path d="M0.5 0.5L3.5 3.5" stroke="#000"/></svg>
<div class="t" style="left:62px;top:35px;font-size:11px;color:#000;letter-spacing:-0.15px;">COMP_HERO_HAIR_ARMS_1B [983]</div>
<div class="a" style="left:33px;top:56px;width:9px;height:1px;background:repeating-linear-gradient(90deg,#000 0 1px,transparent 1px 2px)"></div>
<svg class="a" style="left:43px;top:50px" width="14" height="14" viewBox="0 0 14 14"><path d="M0.5 0.5H10.5L13.5 3.5V13.5H3.5L0.5 10.5Z" fill="#f8c080" stroke="#000"/><rect x="3.5" y="3.5" width="10" height="10" fill="#ff9a30" stroke="#000"/><path d="M0.5 0.5L3.5 3.5" stroke="#000"/></svg>
<div class="t" style="left:62px;top:51px;font-size:11px;color:#000;letter-spacing:-0.15px;">COMP_HERO_HAIR_BACK_1A [984]</div>
<div class="a" style="left:33px;top:72px;width:9px;height:1px;background:repeating-linear-gradient(90deg,#000 0 1px,transparent 1px 2px)"></div>
<svg class="a" style="left:43px;top:66px" width="14" height="14" viewBox="0 0 14 14"><path d="M0.5 0.5H10.5L13.5 3.5V13.5H3.5L0.5 10.5Z" fill="#f8c080" stroke="#000"/><rect x="3.5" y="3.5" width="10" height="10" fill="#ff9a30" stroke="#000"/><path d="M0.5 0.5L3.5 3.5" stroke="#000"/></svg>
<div class="t" style="left:62px;top:67px;font-size:11px;color:#000;letter-spacing:-0.15px;">COMP_HERO_HAIR_BACK_1B [985]</div>
<div class="a" style="left:33px;top:88px;width:9px;height:1px;background:repeating-linear-gradient(90deg,#000 0 1px,transparent 1px 2px)"></div>
<svg class="a" style="left:43px;top:82px" width="14" height="14" viewBox="0 0 14 14"><path d="M0.5 0.5H10.5L13.5 3.5V13.5H3.5L0.5 10.5Z" fill="#f8c080" stroke="#000"/><rect x="3.5" y="3.5" width="10" height="10" fill="#ff9a30" stroke="#000"/><path d="M0.5 0.5L3.5 3.5" stroke="#000"/></svg>
<div class="t" style="left:62px;top:83px;font-size:11px;color:#000;letter-spacing:-0.15px;">COMP_HERO_HAIR_LEGS_1A [986]</div>
<div class="a" style="left:33px;top:104px;width:9px;height:1px;background:repeating-linear-gradient(90deg,#000 0 1px,transparent 1px 2px)"></div>
<svg class="a" style="left:43px;top:98px" width="14" height="14" viewBox="0 0 14 14"><path d="M0.5 0.5H10.5L13.5 3.5V13.5H3.5L0.5 10.5Z" fill="#f8c080" stroke="#000"/><rect x="3.5" y="3.5" width="10" height="10" fill="#ff9a30" stroke="#000"/><path d="M0.5 0.5L3.5 3.5" stroke="#000"/></svg>
<div class="t" style="left:62px;top:99px;font-size:11px;color:#000;letter-spacing:-0.15px;">COMP_HERO_HAIR_LEGS_1B [987]</div>
<div class="a" style="left:33px;top:120px;width:9px;height:1px;background:repeating-linear-gradient(90deg,#000 0 1px,transparent 1px 2px)"></div>
<svg class="a" style="left:43px;top:114px" width="14" height="14" viewBox="0 0 14 14"><path d="M0.5 0.5H10.5L13.5 3.5V13.5H3.5L0.5 10.5Z" fill="#f8c080" stroke="#000"/><rect x="3.5" y="3.5" width="10" height="10" fill="#ff9a30" stroke="#000"/><path d="M0.5 0.5L3.5 3.5" stroke="#000"/></svg>
<div class="t" style="left:62px;top:115px;font-size:11px;color:#000;letter-spacing:-0.15px;">COMP_HERO_HAIR_TORSO_1A [988]</div>
<div class="a" style="left:33px;top:136px;width:9px;height:1px;background:repeating-linear-gradient(90deg,#000 0 1px,transparent 1px 2px)"></div>
<svg class="a" style="left:43px;top:130px" width="14" height="14" viewBox="0 0 14 14"><path d="M0.5 0.5H10.5L13.5 3.5V13.5H3.5L0.5 10.5Z" fill="#f8c080" stroke="#000"/><rect x="3.5" y="3.5" width="10" height="10" fill="#ff9a30" stroke="#000"/><path d="M0.5 0.5L3.5 3.5" stroke="#000"/></svg>
<div class="t" style="left:62px;top:131px;font-size:11px;color:#000;letter-spacing:-0.15px;">COMP_HERO_HAIR_TORSO_1B [989]</div>
<div class="a" style="left:33px;top:152px;width:9px;height:1px;background:repeating-linear-gradient(90deg,#000 0 1px,transparent 1px 2px)"></div>
<svg class="a" style="left:43px;top:146px" width="14" height="14" viewBox="0 0 14 14"><path d="M0.5 0.5H10.5L13.5 3.5V13.5H3.5L0.5 10.5Z" fill="#f8c080" stroke="#000"/><rect x="3.5" y="3.5" width="10" height="10" fill="#ff9a30" stroke="#000"/><path d="M0.5 0.5L3.5 3.5" stroke="#000"/></svg>
<div class="t" style="left:62px;top:147px;font-size:11px;color:#000;letter-spacing:-0.15px;">COMP_HERO_HAIR_OLD_ARMS [990]</div>
<div class="a" style="left:33px;top:168px;width:9px;height:1px;background:repeating-linear-gradient(90deg,#000 0 1px,transparent 1px 2px)"></div>
<svg class="a" style="left:43px;top:162px" width="14" height="14" viewBox="0 0 14 14"><path d="M0.5 0.5H10.5L13.5 3.5V13.5H3.5L0.5 10.5Z" fill="#f8c080" stroke="#000"/><rect x="3.5" y="3.5" width="10" height="10" fill="#ff9a30" stroke="#000"/><path d="M0.5 0.5L3.5 3.5" stroke="#000"/></svg>
<div class="t" style="left:62px;top:163px;font-size:11px;color:#000;letter-spacing:-0.15px;">COMP_HERO_HAIR_OLD_BACK [991]</div>
<div class="a" style="left:33px;top:184px;width:9px;height:1px;background:repeating-linear-gradient(90deg,#000 0 1px,transparent 1px 2px)"></div>
<svg class="a" style="left:43px;top:178px" width="14" height="14" viewBox="0 0 14 14"><path d="M0.5 0.5H10.5L13.5 3.5V13.5H3.5L0.5 10.5Z" fill="#f8c080" stroke="#000"/><rect x="3.5" y="3.5" width="10" height="10" fill="#ff9a30" stroke="#000"/><path d="M0.5 0.5L3.5 3.5" stroke="#000"/></svg>
<div class="t" style="left:62px;top:179px;font-size:11px;color:#000;letter-spacing:-0.15px;">COMP_HERO_HAIR_OLD_LEGS [992]</div>
<div class="a" style="left:33px;top:200px;width:9px;height:1px;background:repeating-linear-gradient(90deg,#000 0 1px,transparent 1px 2px)"></div>
<svg class="a" style="left:43px;top:194px" width="14" height="14" viewBox="0 0 14 14"><path d="M0.5 0.5H10.5L13.5 3.5V13.5H3.5L0.5 10.5Z" fill="#f8c080" stroke="#000"/><rect x="3.5" y="3.5" width="10" height="10" fill="#ff9a30" stroke="#000"/><path d="M0.5 0.5L3.5 3.5" stroke="#000"/></svg>
<div class="t" style="left:62px;top:195px;font-size:11px;color:#000;letter-spacing:-0.15px;">COMP_HERO_HAIR_OLD_TORSO [993]</div>
<div class="a" style="left:33px;top:216px;width:9px;height:1px;background:repeating-linear-gradient(90deg,#000 0 1px,transparent 1px 2px)"></div>
<svg class="a" style="left:43px;top:210px" width="14" height="14" viewBox="0 0 14 14"><path d="M0.5 0.5H10.5L13.5 3.5V13.5H3.5L0.5 10.5Z" fill="#f8c080" stroke="#000"/><rect x="3.5" y="3.5" width="10" height="10" fill="#ff9a30" stroke="#000"/><path d="M0.5 0.5L3.5 3.5" stroke="#000"/></svg>
<div class="t" style="left:62px;top:211px;font-size:11px;color:#000;letter-spacing:-0.15px;">COMP_HERO_HAIR_BLONDE_ARMS [994]</div>
<div class="a" style="left:33px;top:232px;width:9px;height:1px;background:repeating-linear-gradient(90deg,#000 0 1px,transparent 1px 2px)"></div>
<svg class="a" style="left:43px;top:226px" width="14" height="14" viewBox="0 0 14 14"><path d="M0.5 0.5H10.5L13.5 3.5V13.5H3.5L0.5 10.5Z" fill="#f8c080" stroke="#000"/><rect x="3.5" y="3.5" width="10" height="10" fill="#ff9a30" stroke="#000"/><path d="M0.5 0.5L3.5 3.5" stroke="#000"/></svg>
<div class="t" style="left:62px;top:227px;font-size:11px;color:#000;letter-spacing:-0.15px;">COMP_HERO_HAIR_BLONDE_BACK [995]</div>
<div class="a" style="left:33px;top:248px;width:9px;height:1px;background:repeating-linear-gradient(90deg,#000 0 1px,transparent 1px 2px)"></div>
<svg class="a" style="left:43px;top:242px" width="14" height="14" viewBox="0 0 14 14"><path d="M0.5 0.5H10.5L13.5 3.5V13.5H3.5L0.5 10.5Z" fill="#f8c080" stroke="#000"/><rect x="3.5" y="3.5" width="10" height="10" fill="#ff9a30" stroke="#000"/><path d="M0.5 0.5L3.5 3.5" stroke="#000"/></svg>
<div class="t" style="left:62px;top:243px;font-size:11px;color:#000;letter-spacing:-0.15px;">COMP_HERO_HAIR_BLONDE_LEGS [996]</div>
<div class="a" style="left:33px;top:264px;width:9px;height:1px;background:repeating-linear-gradient(90deg,#000 0 1px,transparent 1px 2px)"></div>
<svg class="a" style="left:43px;top:258px" width="14" height="14" viewBox="0 0 14 14"><path d="M0.5 0.5H10.5L13.5 3.5V13.5H3.5L0.5 10.5Z" fill="#f8c080" stroke="#000"/><rect x="3.5" y="3.5" width="10" height="10" fill="#ff9a30" stroke="#000"/><path d="M0.5 0.5L3.5 3.5" stroke="#000"/></svg>
<div class="t" style="left:62px;top:259px;font-size:11px;color:#000;letter-spacing:-0.15px;">COMP_HERO_HAIR_BLONDE_TORSO [997]</div>
<div class="a" style="left:33px;top:280px;width:9px;height:1px;background:repeating-linear-gradient(90deg,#000 0 1px,transparent 1px 2px)"></div>
<svg class="a" style="left:43px;top:274px" width="14" height="14" viewBox="0 0 14 14"><path d="M0.5 0.5H10.5L13.5 3.5V13.5H3.5L0.5 10.5Z" fill="#f8c080" stroke="#000"/><rect x="3.5" y="3.5" width="10" height="10" fill="#ff9a30" stroke="#000"/><path d="M0.5 0.5L3.5 3.5" stroke="#000"/></svg>
<div class="t" style="left:62px;top:275px;font-size:11px;color:#000;letter-spacing:-0.15px;">COMP_HERO_WILL_ARMS [998]</div>
<div class="a" style="left:33px;top:296px;width:9px;height:1px;background:repeating-linear-gradient(90deg,#000 0 1px,transparent 1px 2px)"></div>
<svg class="a" style="left:43px;top:290px" width="14" height="14" viewBox="0 0 14 14"><path d="M0.5 0.5H10.5L13.5 3.5V13.5H3.5L0.5 10.5Z" fill="#f8c080" stroke="#000"/><rect x="3.5" y="3.5" width="10" height="10" fill="#ff9a30" stroke="#000"/><path d="M0.5 0.5L3.5 3.5" stroke="#000"/></svg>
<div class="t" style="left:62px;top:291px;font-size:11px;color:#000;letter-spacing:-0.15px;">COMP_HERO_WILL_BACK [999]</div>
<div class="a" style="left:33px;top:312px;width:9px;height:1px;background:repeating-linear-gradient(90deg,#000 0 1px,transparent 1px 2px)"></div>
<svg class="a" style="left:43px;top:306px" width="14" height="14" viewBox="0 0 14 14"><path d="M0.5 0.5H10.5L13.5 3.5V13.5H3.5L0.5 10.5Z" fill="#f8c080" stroke="#000"/><rect x="3.5" y="3.5" width="10" height="10" fill="#ff9a30" stroke="#000"/><path d="M0.5 0.5L3.5 3.5" stroke="#000"/></svg>
<div class="t" style="left:62px;top:307px;font-size:11px;color:#000;letter-spacing:-0.15px;">COMP_HERO_WILL_FACE [1000]</div>
<div class="a" style="left:33px;top:328px;width:9px;height:1px;background:repeating-linear-gradient(90deg,#000 0 1px,transparent 1px 2px)"></div>
<svg class="a" style="left:43px;top:322px" width="14" height="14" viewBox="0 0 14 14"><path d="M0.5 0.5H10.5L13.5 3.5V13.5H3.5L0.5 10.5Z" fill="#f8c080" stroke="#000"/><rect x="3.5" y="3.5" width="10" height="10" fill="#ff9a30" stroke="#000"/><path d="M0.5 0.5L3.5 3.5" stroke="#000"/></svg>
<div class="t" style="left:62px;top:323px;font-size:11px;color:#000;letter-spacing:-0.15px;">COMP_HERO_WILL_LEGS [1001]</div>
<div class="a" style="left:33px;top:344px;width:9px;height:1px;background:repeating-linear-gradient(90deg,#000 0 1px,transparent 1px 2px)"></div>
<svg class="a" style="left:43px;top:338px" width="14" height="14" viewBox="0 0 14 14"><path d="M0.5 0.5H10.5L13.5 3.5V13.5H3.5L0.5 10.5Z" fill="#f8c080" stroke="#000"/><rect x="3.5" y="3.5" width="10" height="10" fill="#ff9a30" stroke="#000"/><path d="M0.5 0.5L3.5 3.5" stroke="#000"/></svg>
<div class="t" style="left:62px;top:339px;font-size:11px;color:#000;letter-spacing:-0.15px;">COMP_HERO_WILL_TORSO [1002]</div>
</div>
<div class="a" style="left:503px;top:52px;width:17px;height:351px;background:linear-gradient(90deg,#e6e6e6,#f0f0f0 40%,#f6f6f6)"></div>
<svg class="a" style="left:508px;top:60px" width="7" height="4" viewBox="0 0 7 4"><path d="M0 4L3.5 0L7 4Z" fill="#202020"/></svg>
<svg class="a" style="left:508px;top:392px" width="7" height="4" viewBox="0 0 7 4"><path d="M0 0L3.5 4L7 0Z" fill="#202020"/></svg>
<div class="a" style="left:504px;top:117px;width:15px;height:18px;border:1px solid #9a9a9a;border-radius:2px;background:linear-gradient(90deg,#f6f6f6,#e8e8e8 50%,#d8d8d8 51%,#e0e0e0)"></div>
<div class="a" style="left:508px;top:123px;width:6px;height:1px;background:#404040"></div>
<div class="a" style="left:508px;top:126px;width:6px;height:1px;background:#404040"></div>
<div class="a" style="left:508px;top:129px;width:6px;height:1px;background:#404040"></div>
<div class="a" style="left:8px;top:403px;width:495px;height:17px;background:linear-gradient(#e6e6e6,#f0f0f0 40%,#f6f6f6)"></div>
<svg class="a" style="left:15px;top:407px" width="4" height="7" viewBox="0 0 4 7"><path d="M4 0L0 3.5L4 7Z" fill="#202020"/></svg>
<svg class="a" style="left:492px;top:407px" width="4" height="7" viewBox="0 0 4 7"><path d="M0 0L4 3.5L0 7Z" fill="#202020"/></svg>
<div class="a" style="left:27px;top:404px;width:212px;height:15px;border:1px solid #9a9a9a;border-radius:2px;background:linear-gradient(#f6f6f6,#e8e8e8 50%,#d8d8d8 51%,#e0e0e0)"></div>
<div class="a" style="left:130px;top:408px;width:1px;height:6px;background:#404040"></div>
<div class="a" style="left:133px;top:408px;width:1px;height:6px;background:#404040"></div>
<div class="a" style="left:136px;top:408px;width:1px;height:6px;background:#404040"></div>
<div class="a" style="left:503px;top:403px;width:17px;height:17px;background:#f0f0f0"></div>
<svg class="a" style="left:508px;top:408px" width="10" height="10" viewBox="0 0 10 10"><g fill="#b0b0b0"><rect x="7" y="1" width="2" height="2"/><rect x="4" y="4" width="2" height="2"/><rect x="7" y="4" width="2" height="2"/><rect x="1" y="7" width="2" height="2"/><rect x="4" y="7" width="2" height="2"/><rect x="7" y="7" width="2" height="2"/></g></svg>
</div>
<div class="a" style="left:729px;top:59px;width:549px;height:579px;background:#bccfe4;border:1px solid #1c2024;border-radius:6px 6px 0 0;overflow:hidden">
<div class="a" style="left:0px;top:0px;width:547px;height:577px;border:1px solid rgba(255,255,255,0.85);border-radius:5px 5px 0 0;border-bottom-color:rgba(255,255,255,.6)"></div>
<div class="a" style="left:1px;top:1px;width:545px;height:25px;background:linear-gradient(#98b0d0,#a4bed8 60%,#b0cce4 85%,#bccce8);border-radius:4px 4px 0 0"></div>
<svg class="a" style="left:10px;top:9px" width="14" height="14" viewBox="0 0 14 14"><rect x="1.5" y="4.5" width="4" height="5" fill="#e06070" stroke="#8a1020"/><rect x="5.5" y="0.5" width="7" height="7" fill="#ffd840" stroke="#8a7010"/><rect x="5.5" y="8.5" width="5" height="4" fill="#7090e8" stroke="#3050a0"/></svg>
<div class="t" style="left:29px;top:9px;font-size:12px;color:#000;letter-spacing:-0.35px;line-height:16px">NULLDEF_CHeroMorphDef</div>
<div class="a" style="left:450px;top:9px;width:28px;height:15px;background:linear-gradient(#d0e0f2,#b8cce6 48%,#a0b8d8 52%,#c0d8f0);border:1px solid #4a5a78;border-radius:3px"></div>
<div class="a" style="left:458px;top:16px;width:11px;height:5px;background:#fff;border:1px solid #404850;border-radius:1px"></div>
<div class="a" style="left:480px;top:9px;width:28px;height:15px;background:linear-gradient(#d0e0f2,#b8cce6 48%,#a0b8d8 52%,#c0d8f0);border:1px solid #4a5a78;border-radius:3px"></div>
<div class="a" style="left:488px;top:12px;width:11px;height:9px;background:#fff;border:1px solid #404850;border-radius:1px"></div>
<div class="a" style="left:491px;top:15px;width:5px;height:3px;background:#8a94a4;border:1px solid #404850"></div>
<div class="a" style="left:510px;top:9px;width:28px;height:15px;background:linear-gradient(#e8a898,#d87868 45%,#c04020 55%,#d86848);border:1px solid #3a1810;border-radius:3px"></div>
<svg class="a" style="left:518px;top:12px" width="11" height="9" viewBox="0 0 11 9"><path d="M0.5 0.5H3.6L5.5 2.8L7.4 0.5H10.5L7.3 4.5L10.5 8.5H7.4L5.5 6.2L3.6 8.5H0.5L3.7 4.5Z" fill="#fff" stroke="#3a4250" stroke-width="1" stroke-linejoin="round"/></svg>
<div class="a" style="left:0px;top:576px;width:547px;height:1px;background:#8ad0e0"></div>
<div class="a" style="left:7px;top:26px;width:533px;height:544px;background:#f0f0f0;border-top:1px solid #f8fafc"></div>
<div class="t" style="left:20px;top:39px;font-size:11px;color:#000;letter-spacing:-0.15px;">Symbol Name:</div>
<div class="a" style="left:104px;top:36px;width:424px;height:20px;background:#fff;border:1px solid #abadb3;border-top-color:#abadb3;border-color:#adb2b5 #dbdfe6 #e3e9ef #e2e3ea;border-radius:2px"></div>
<div class="t" style="left:107px;top:40px;font-size:11px;color:#000;letter-spacing:-0.15px;">NULLDEF_CHeroMorphDef</div>
<div class="t" style="left:20px;top:63px;font-size:11px;color:#000;letter-spacing:-0.15px;">Definition Type:</div>
<div class="a" style="left:104px;top:60px;width:424px;height:20px;background:#fff;border:1px solid;border-color:#adb2b5 #dbdfe6 #e3e9ef #e2e3ea;border-radius:2px"></div>
<div class="t" style="left:107px;top:64px;font-size:11px;color:#000;letter-spacing:-0.15px;">CHeroMorphDef</div>
<div class="t" style="left:20px;top:89px;font-size:11px;color:#000;letter-spacing:-0.15px;">ID:</div>
<div class="a" style="left:104px;top:86px;width:68px;height:20px;background:#f0f0f0;border:1px solid;border-color:#adb2b5 #dbdfe6 #e3e9ef #e2e3ea;border-radius:2px"></div>
<div class="t" style="left:107px;top:90px;font-size:11px;color:#000;letter-spacing:-0.15px;">0</div>
<div class="a" style="left:143px;top:113px;width:91px;height:22px;border:1px solid #707070;border-radius:3px;background:linear-gradient(#f2f2f2,#ebebeb 50%,#dddddd 51%,#cfcfcf);box-shadow:inset 0 0 0 1px #fcfcfc"></div>
<div class="t" style="left:143px;top:113px;width:91px;height:22px;line-height:22px;text-align:center;font-size:11px;letter-spacing:-0.15px">View Data</div>
<div class="a" style="left:241px;top:113px;width:91px;height:22px;border:1px solid #707070;border-radius:3px;background:linear-gradient(#f2f2f2,#ebebeb 50%,#dddddd 51%,#cfcfcf);box-shadow:inset 0 0 0 1px #fcfcfc"></div>
<div class="t" style="left:241px;top:113px;width:91px;height:22px;line-height:22px;text-align:center;font-size:11px;letter-spacing:-0.15px">Export</div>
<div class="a" style="left:339px;top:113px;width:91px;height:22px;border:1px solid #707070;border-radius:3px;background:linear-gradient(#f2f2f2,#ebebeb 50%,#dddddd 51%,#cfcfcf);box-shadow:inset 0 0 0 1px #fcfcfc"></div>
<div class="t" style="left:339px;top:113px;width:91px;height:22px;line-height:22px;text-align:center;font-size:11px;letter-spacing:-0.15px">Import</div>
<div class="a" style="left:437px;top:113px;width:91px;height:22px;border:1px solid #707070;border-radius:3px;background:linear-gradient(#f2f2f2,#ebebeb 50%,#dddddd 51%,#cfcfcf);box-shadow:inset 0 0 0 1px #fcfcfc"></div>
<div class="t" style="left:437px;top:113px;width:91px;height:22px;line-height:22px;text-align:center;font-size:11px;letter-spacing:-0.15px">Apply Changes</div>
<div class="a" style="left:7px;top:151px;width:200px;height:419px;background:#fff;border:1px solid #828790;border-right-color:#d8d8d8"></div>
<svg class="a" style="left:17px;top:157px" width="9" height="9" viewBox="0 0 9 9"><rect x="0.5" y="0.5" width="8" height="8" fill="#f0f0f4" stroke="#919191"/><path d="M2 4.5H7" stroke="#202020"/><path d="M4.5 2V7" stroke="#202020"/></svg>
<div class="a" style="left:27px;top:161px;width:4px;height:1px;background:repeating-linear-gradient(90deg,#000 0 1px,transparent 1px 2px)"></div>
<div class="a" style="left:31px;top:153px;width:81px;height:16px;background:#3399ff"></div>
<div class="t" style="left:33px;top:154px;font-size:11px;color:#fff;letter-spacing:-0.3px;">CHeroMorphDef</div>
<div class="t" style="left:218px;top:154px;font-size:11px;color:#000;letter-spacing:-0.15px;">unknown</div>
<div class="a" style="left:212px;top:170px;width:281px;height:87px;border:1px solid #a0a0a0;border-radius:1px"></div>
<div class="t" style="left:222px;top:178px;font-size:11px;color:#000;letter-spacing:-0.15px;">HeroMorphArray1 [UINT]</div>
<div class="a" style="left:347px;top:174px;width:80px;height:20px;background:#fff;border:1px solid;border-color:#cdcdcd #e6e6e6 #ececec #e6e6e6;border-radius:2px"></div>
<div class="t" style="left:350px;top:178px;font-size:11px;color:#000;letter-spacing:-0.15px;">0</div>
<div class="t" style="left:222px;top:205px;font-size:11px;color:#000;letter-spacing:-0.15px;">Texture Morph List[0]</div>
<div class="a" style="left:330px;top:200px;width:39px;height:21px;border:1px solid #707070;border-radius:3px;background:linear-gradient(#f2f2f2,#ebebeb 50%,#dddddd 51%,#cfcfcf)"></div>
<div class="t" style="left:330px;top:200px;width:39px;height:21px;line-height:20px;text-align:center;font-size:11px;letter-spacing:-0.15px">Add</div>
<div class="a" style="left:377px;top:200px;width:52px;height:21px;border:1px solid #707070;border-radius:3px;background:linear-gradient(#f2f2f2,#ebebeb 50%,#dddddd 51%,#cfcfcf)"></div>
<div class="t" style="left:377px;top:200px;width:52px;height:21px;line-height:20px;text-align:center;font-size:11px;letter-spacing:-0.15px">Sort</div>
<div class="a" style="left:436px;top:201px;width:44px;height:20px;background:#fff;border:1px solid;border-color:#cdcdcd #e6e6e6 #ececec #e6e6e6;border-radius:2px"></div>
<div class="t" style="left:439px;top:205px;font-size:11px;color:#000;letter-spacing:-0.15px;">0</div>
<div class="t" style="left:222px;top:234px;font-size:11px;color:#000;letter-spacing:-0.15px;">Rogue Control [UINT]</div>
<div class="a" style="left:332px;top:230px;width:80px;height:20px;background:#fff;border:1px solid;border-color:#cdcdcd #e6e6e6 #ececec #e6e6e6;border-radius:2px"></div>
<div class="t" style="left:335px;top:234px;font-size:11px;color:#000;letter-spacing:-0.15px;">28011707</div>
<div class="t" style="left:218px;top:264px;font-size:11px;color:#000;letter-spacing:-0.15px;">HeroMorph</div>
<div class="a" style="left:212px;top:280px;width:270px;height:61px;border:1px solid #a0a0a0;border-radius:1px"></div>
<div class="t" style="left:222px;top:287px;font-size:11px;color:#000;letter-spacing:-0.15px;">HeroMorphArray2 [UINT]</div>
<div class="a" style="left:347px;top:283px;width:80px;height:20px;background:#fff;border:1px solid;border-color:#cdcdcd #e6e6e6 #ececec #e6e6e6;border-radius:2px"></div>
<div class="t" style="left:350px;top:287px;font-size:11px;color:#000;letter-spacing:-0.15px;">0</div>
<div class="t" style="left:222px;top:314px;font-size:11px;color:#000;letter-spacing:-0.15px;">Bone Config List[0]</div>
<div class="a" style="left:319px;top:309px;width:39px;height:21px;border:1px solid #707070;border-radius:3px;background:linear-gradient(#f2f2f2,#ebebeb 50%,#dddddd 51%,#cfcfcf)"></div>
<div class="t" style="left:319px;top:309px;width:39px;height:21px;line-height:20px;text-align:center;font-size:11px;letter-spacing:-0.15px">Add</div>
<div class="a" style="left:366px;top:309px;width:52px;height:21px;border:1px solid #707070;border-radius:3px;background:linear-gradient(#f2f2f2,#ebebeb 50%,#dddddd 51%,#cfcfcf)"></div>
<div class="t" style="left:366px;top:309px;width:52px;height:21px;line-height:20px;text-align:center;font-size:11px;letter-spacing:-0.15px">Sort</div>
<div class="a" style="left:425px;top:310px;width:44px;height:20px;background:#fff;border:1px solid;border-color:#cdcdcd #e6e6e6 #ececec #e6e6e6;border-radius:2px"></div>
<div class="t" style="left:428px;top:314px;font-size:11px;color:#000;letter-spacing:-0.15px;">0</div>
<div class="t" style="left:218px;top:347px;font-size:11px;color:#000;letter-spacing:-0.15px;">unknown</div>
<div class="a" style="left:212px;top:363px;width:292px;height:87px;border:1px solid #a0a0a0;border-radius:1px"></div>
<div class="t" style="left:222px;top:371px;font-size:11px;color:#000;letter-spacing:-0.15px;">HeroMorphArray3 [UINT]</div>
<div class="a" style="left:347px;top:368px;width:80px;height:20px;background:#fff;border:1px solid;border-color:#cdcdcd #e6e6e6 #ececec #e6e6e6;border-radius:2px"></div>
<div class="t" style="left:350px;top:372px;font-size:11px;color:#000;letter-spacing:-0.15px;">0</div>
<div class="t" style="left:222px;top:398px;font-size:11px;color:#000;letter-spacing:-0.15px;">Effect Attachments 1[0]</div>
<div class="a" style="left:341px;top:393px;width:39px;height:21px;border:1px solid #707070;border-radius:3px;background:linear-gradient(#f2f2f2,#ebebeb 50%,#dddddd 51%,#cfcfcf)"></div>
<div class="t" style="left:341px;top:393px;width:39px;height:21px;line-height:20px;text-align:center;font-size:11px;letter-spacing:-0.15px">Add</div>
<div class="a" style="left:388px;top:393px;width:52px;height:21px;border:1px solid #707070;border-radius:3px;background:linear-gradient(#f2f2f2,#ebebeb 50%,#dddddd 51%,#cfcfcf)"></div>
<div class="t" style="left:388px;top:393px;width:52px;height:21px;line-height:20px;text-align:center;font-size:11px;letter-spacing:-0.15px">Sort</div>
<div class="a" style="left:447px;top:394px;width:44px;height:20px;background:#fff;border:1px solid;border-color:#cdcdcd #e6e6e6 #ececec #e6e6e6;border-radius:2px"></div>
<div class="t" style="left:450px;top:398px;font-size:11px;color:#000;letter-spacing:-0.15px;">0</div>
<div class="t" style="left:222px;top:427px;font-size:11px;color:#000;letter-spacing:-0.15px;">Rogue Control [UINT]</div>
<div class="a" style="left:332px;top:424px;width:80px;height:20px;background:#fff;border:1px solid;border-color:#cdcdcd #e6e6e6 #ececec #e6e6e6;border-radius:2px"></div>
<div class="t" style="left:335px;top:428px;font-size:11px;color:#000;letter-spacing:-0.15px;">28011708</div>
<div class="t" style="left:218px;top:456px;font-size:11px;color:#000;letter-spacing:-0.15px;">unknown</div>
<div class="a" style="left:212px;top:472px;width:292px;height:87px;border:1px solid #a0a0a0;border-radius:1px"></div>
<div class="t" style="left:222px;top:480px;font-size:11px;color:#000;letter-spacing:-0.15px;">HeroMorphArray4 [UINT]</div>
<div class="a" style="left:347px;top:477px;width:80px;height:20px;background:#fff;border:1px solid;border-color:#cdcdcd #e6e6e6 #ececec #e6e6e6;border-radius:2px"></div>
<div class="t" style="left:350px;top:481px;font-size:11px;color:#000;letter-spacing:-0.15px;">0</div>
<div class="t" style="left:222px;top:507px;font-size:11px;color:#000;letter-spacing:-0.15px;">Effect Attachments 2[0]</div>
<div class="a" style="left:341px;top:502px;width:39px;height:21px;border:1px solid #707070;border-radius:3px;background:linear-gradient(#f2f2f2,#ebebeb 50%,#dddddd 51%,#cfcfcf)"></div>
<div class="t" style="left:341px;top:502px;width:39px;height:21px;line-height:20px;text-align:center;font-size:11px;letter-spacing:-0.15px">Add</div>
<div class="a" style="left:388px;top:502px;width:52px;height:21px;border:1px solid #707070;border-radius:3px;background:linear-gradient(#f2f2f2,#ebebeb 50%,#dddddd 51%,#cfcfcf)"></div>
<div class="t" style="left:388px;top:502px;width:52px;height:21px;line-height:20px;text-align:center;font-size:11px;letter-spacing:-0.15px">Sort</div>
<div class="a" style="left:447px;top:503px;width:44px;height:20px;background:#fff;border:1px solid;border-color:#cdcdcd #e6e6e6 #ececec #e6e6e6;border-radius:2px"></div>
<div class="t" style="left:450px;top:507px;font-size:11px;color:#000;letter-spacing:-0.15px;">0</div>
<div class="t" style="left:222px;top:536px;font-size:11px;color:#000;letter-spacing:-0.15px;">Rogue Control [UINT]</div>
<div class="a" style="left:332px;top:532px;width:80px;height:20px;background:#fff;border:1px solid;border-color:#cdcdcd #e6e6e6 #ececec #e6e6e6;border-radius:2px"></div>
<div class="t" style="left:335px;top:536px;font-size:11px;color:#000;letter-spacing:-0.15px;">28011708</div>
</div>
<svg class="a" style="left:0;top:0" width="1324" height="986" viewBox="0 0 1324 986"><path d="M937.0 213.0 L946.0 211.0 L981.0 212.5 L1041.0 211.5 L1090.0 210.6 L1150.0 210.6 L1170.0 211.7 L1183.5 214.5 L1198.0 217.6 L1217.0 220.9 L1223.7 226.8 L1231.5 230.7 L1236.0 236.0 L1240.4 242.4 L1242.0 254.0 L1242.6 280.0 L1243.5 310.0 L1243.3 400.0 L1246.0 420.0 L1246.7 500.0 L1246.7 600.0 L1246.8 612.0 L1245.6 623.6 L1239.0 627.8 L1229.0 630.8 L1152.0 630.5 L1137.5 631.4 L1100.0 630.8 L1070.5 630.7 L1057.0 633.0 L1029.0 634.0 L1017.0 635.0 L1003.0 632.5 L958.0 632.5 L940.0 628.3 L932.0 625.5 L921.9 620.0 L916.4 610.0 L912.8 600.0 L911.3 590.0 L911.0 560.0 L911.9 525.0 L912.8 500.0 L914.6 480.0 L917.3 460.0 L919.0 450.0 L920.7 430.0 L922.4 400.0 L924.0 380.0 L926.7 350.0 L928.4 320.0 L930.0 310.0 L931.2 283.0 L934.5 270.0 L935.6 250.0 L936.7 220.0 Z" fill="none" stroke="#000" stroke-width="4.5" stroke-linejoin="round"/></svg>
</body></html>
